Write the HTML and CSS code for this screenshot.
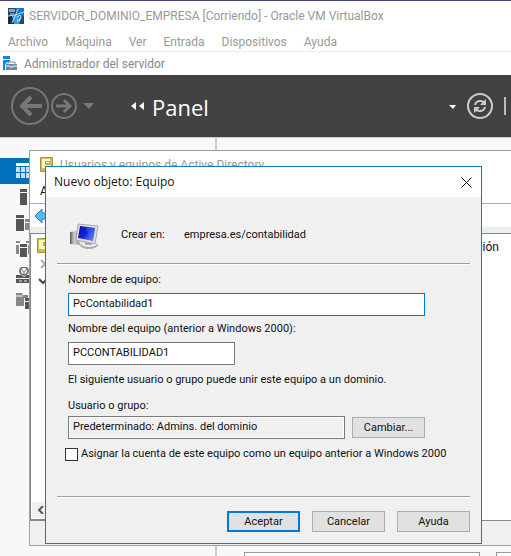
FILE: index.html
```html
<!DOCTYPE html>
<html lang="es">
<head>
<meta charset="utf-8">
<title>SERVIDOR_DOMINIO_EMPRESA</title>
<link rel="stylesheet" href="styles.css">
</head>
<body>
<header class="vm">
  <div class="vm-title">
    <svg width="16" height="16" viewBox="0 0 16 16"><path fill="#24486f" d="M0 0h16v16H0z"/><path fill="#1c75c4" d="M8 0h8v8H8z"/><path fill="#172c4c" d="M0 8h8v8H0z"/><path fill="#8ba3bd" d="M1 1h6v3H1z"/><path fill="#399fe3" d="m4 8 5-2 4 5-2 5H6z"/><path d="M10 1 7 8l-3 7M0 8l7-1 9-3M2 6h4" stroke="#b8d8ea" fill="none"/><path d="M9 9q4-3 4 0l-2 4-2-1" stroke="#e9eff5" fill="none"/></svg>
    <span>SERVIDOR_DOMINIO_EMPRESA [Corriendo] - Oracle VM VirtualBox</span>
  </div>
  <nav class="vm-menu"><span>Archivo</span><span>Máquina</span><span>Ver</span><span>Entrada</span><span>Dispositivos</span><span>Ayuda</span></nav>
</header>
<div class="sm-title">
  <svg width="15" height="15" viewBox="0 0 15 15"><path fill="#1686d9" d="M0 0h7v3H0zM0 4h7v2H4l-2 3v5H0z"/><path d="M5 8V6h7v2" fill="none" stroke="#6e8ca2"/><path fill="#6b8ca6" d="M3 8h11v6H3z"/><path d="M3 10h4v1h3v-1h4" stroke="#e8eef3" fill="none"/></svg>
  <span>Administrador del servidor</span>
</div>
<div class="banner">
  <svg class="history" width="84" height="40" viewBox="0 0 84 40"><g fill="none" stroke="#777"><circle cx="19" cy="20" r="18" stroke-width="2"/><circle cx="53" cy="20" r="12" stroke-width="2"/><path stroke-width="4" d="M31 20H10m10-9-9 9 9 9"/><path stroke-width="3" d="M45 20h15m-7-6 6 6-6 6"/></g><path fill="#777" d="M72 17h11l-5 6z"/></svg>
  <svg class="rewind" width="14" height="8" viewBox="0 0 14 8"><path fill="#fff" d="M5 0v8L0 4zM13 0v8L8 4z"/></svg>
  <h1>Panel</h1>
  <svg class="refresh" width="62" height="28" viewBox="0 0 62 28"><path fill="#fff" d="M0 13h7l-3 4z"/><g fill="none" stroke="#ccc" stroke-width="2"><circle cx="31" cy="14" r="12"/><path d="M26 13q1-4 5-4 3 0 5 2M36 15q-1 4-5 4-3 0-5-2"/></g><path fill="#ccc" d="M37 7v6h-6zM25 21v-6h6z"/><path fill="#bbb" d="M55 5h2v18h-2z"/></svg>
</div>
<main class="desk">
  <aside class="side">
    <div class="tab on"><svg width="14" height="16" viewBox="0 0 14 16"><path fill="#fff" d="M0 0h14v3H0z"/><path fill="#c9e1f2" d="M0 4h4v5H0zM5 4h4v5H5zM5 10h4v5H5zM0 10h4v5H0zM10 4h4v5h-4zM10 10h4v5h-4z"/></svg></div>
    <div class="tab"><svg width="14" height="16" viewBox="0 0 14 16"><path fill="#555" d="M4 0h7v3H4zM4 4h7v12H4z"/></svg></div>
    <div class="tab"><svg width="14" height="16" viewBox="0 0 14 16"><path fill="#555" d="M0 0h8v3H0zM0 4h8v12H0z"/><path fill="#888" d="M9 4h5v3H9zM9 8h5v7H9z"/></svg></div>
    <div class="tab"><svg width="14" height="16" viewBox="0 0 14 16"><path fill="#888" d="M0 0h4v2H0zM10 0h4v2h-4zM0 4h3v9H0zM12 4h2v9h-2z"/><path fill="#555" d="M4 3h7v3H4zM4 7h7v9H4z"/></svg></div>
    <div class="tab"><svg width="14" height="16" viewBox="0 0 14 16"><circle cx="8" cy="4" r="4" fill="none" stroke="#777" stroke-width="2"/><path d="m5 2 3 3 3-3M8 5v3" stroke="#777" fill="none"/><path fill="#555" d="M0 8h5l3 2 3-2h3v3H0zM0 12h14v4H0z"/><path stroke="#eee" d="M3 14h3m2 0h3"/></svg></div>
    <div class="tab"><svg width="14" height="16" viewBox="0 0 14 16"><path fill="#888" d="M0 0h6l1 2h5v3H8v1H0zM0 4h8v9H0z"/><path stroke="#f8f8f8" d="M0 3h7"/><path fill="#555" d="M9 5h5v3H9zM9 9h5v7H9z"/></svg></div>
  </aside>
  <section class="content">
    <div class="tile"></div><div class="tile"></div>
  </section>

  <section class="ad">
    <div class="ad-title">
      <svg width="13" height="16" viewBox="0 0 13 16"><path fill="#d4bd58" stroke="#ad913c" d="M.5.5h12v14H.5z"/><path fill="#fff4b5" d="M2 2h8v9H2z"/><path fill="#c5a83f" d="M5 4h5v4H5z"/><path fill="#fff" d="M6 5h3v1H6z"/></svg>
      <span>Usuarios y equipos de Active Directory</span>
    </div>
    <div class="ad-menu">Archivo</div>
    <div class="ad-tools"><svg width="18" height="16" viewBox="0 0 18 16"><path fill="#55baf0" stroke="#2783bd" d="m1 8 7-7v4h9v6H8v4z"/></svg></div>
    <div class="ad-panes">
      <div class="tree">
        <svg width="14" height="54" viewBox="0 0 14 54"><path fill="#d4bd58" stroke="#ad913c" d="M.5.5h13v14H.5z"/><path fill="#fff4b5" d="M2 2h8v9H2z"/><path fill="#c5a83f" d="M6 4h7v4H6z"/><path d="m4 22 4 4-4 4" stroke="#aaa" stroke-width="2" fill="none"/><path d="m2 41 4 4 4-4" stroke="#444" stroke-width="2" fill="none"/></svg>
        <div class="scroll"><svg width="7" height="8" viewBox="0 0 7 8"><path d="M6 0 2 4l4 4" stroke="#555" stroke-width="2" fill="none"/></svg></div>
      </div>
      <div class="list">Descripción</div>
    </div>
  </section>

  <form class="dialog">
    <div class="dlg-title"><h2>Nuevo objeto: Equipo</h2>
      <button class="close" type="button" aria-label="Cerrar"><svg width="11" height="11" viewBox="0 0 11 11"><path d="m.5.5 10 10m0-10-10 10" stroke="#111" fill="none"/></svg></button></div>
    <div class="dlg-body">
      <div class="where">
        <svg width="29" height="28" viewBox="0 0 29 28"><defs><linearGradient id="scr" x2="1" y2="1"><stop stop-color="#0610a0"/><stop offset=".5" stop-color="#1228d8"/><stop offset="1" stop-color="#82a4ff"/></linearGradient><linearGradient id="box"><stop stop-color="#555"/><stop offset=".4" stop-color="#ccc"/><stop offset="1" stop-color="#999"/></linearGradient></defs><path fill="url(#box)" d="m0 9 7-1 3 14-10-1z"/><ellipse cx="19" cy="22" rx="9" ry="4" fill="#aaa"/><ellipse cx="19" cy="21" rx="8" ry="3" fill="#eee"/><path fill="#aaa" d="m15 17 7 1v4h-7z"/><path fill="#e0e0dc" stroke="#aaa" d="m8 1 20 2-3 18-19-4z"/><path fill="url(#scr)" d="m10 3 15 2-2 13-15-3z"/><path fill="#4a6cf0" opacity=".5" d="m16 4 9 1-2 13-3-1z"/></svg>
        <span>Crear en:</span><span>empresa.es/contabilidad</span>
      </div>
      <hr>
      <div class="fields">
        <label for="n1">Nombre de equipo:</label>
        <input id="n1" class="active" type="text" value="PcContabilidad1">
        <label for="n2">Nombre del equipo (anterior a Windows 2000):</label>
        <input id="n2" class="short" type="text" value="PCCONTABILIDAD1">
        <p>El siguiente usuario o grupo puede unir este equipo a un dominio.</p>
        <label for="grp">Usuario o grupo:</label>
        <div class="pick"><input id="grp" type="text" readonly value="Predeterminado: Admins. del dominio"><button type="button">Cambiar...</button></div>
      </div>
      <label class="check"><input type="checkbox"><span>Asignar la cuenta de este equipo como un equipo anterior a Windows 2000</span></label>
      <hr>
      <div class="actions"><button class="default" type="button">Aceptar</button><button type="button">Cancelar</button><button type="button">Ayuda</button></div>
    </div>
  </form>
</main>
</body>
</html>
```
FILE: styles.css
```css
* { box-sizing: border-box; }
body {
  margin: 0;
  min-height: 100vh;
  display: flex;
  flex-direction: column;
  overflow: hidden;
  background: #fff;
  font: 12px/16px Roboto, "Noto Sans", sans-serif;
  color: #111;
}
svg { display: block; flex: none; }
.vm { border-top: 1px solid #41446c; border-bottom: 1px solid #ececec; color: #999; }
.vm-title { display: flex; align-items: center; gap: 5px; height: 30px; padding-left: 8px; }
.vm-menu { display: flex; align-items: center; gap: 17px; height: 20px; padding: 2px 0 0 8px; }
.sm-title { display: flex; align-items: center; gap: 6px; height: 23px; padding-left: 3px; color: #888; }
.banner { display: flex; align-items: center; height: 62px; padding-left: 11px; background: #424242; color: #fff; }
.rewind { margin-left: 36px; }
.banner h1 { margin: 0 0 0 7px; padding-top: 2px; font: 22px/30px "Open Sans", sans-serif; }
.refresh { margin-left: auto; }

.desk { position: relative; flex: 1; display: flex; min-height: 418px; border-top: 1px solid #ccc; background: #f8f8f8; }
.side { flex: none; width: 217px; padding-top: 20px; border-right: 2px solid #ccc; }
.tab { height: 26px; padding: 5px 0 0 16px; }
.on { background: #0070bb; }
.content { flex: 1; min-width: 0; display: flex; align-items: flex-end; gap: 16px; padding-left: 27px; }
.tile { width: 236px; height: 4px; flex: none; border: 1px solid #999; border-bottom: 0; background: #fff; }
.tile + .tile { flex: 1; min-width: 0; border-right: 0; }

.ad { position: absolute; top: 12px; left: 29px; right: 0; bottom: 10px; display: flex; flex-direction: column; border: 1px solid #a0a0a0; border-right: 0; background: #fff; }
.ad-title { display: flex; align-items: center; gap: 7px; height: 28px; padding-left: 10px; color: #999; }
.ad-menu { height: 25px; padding: 4px 0 0 10px; border-bottom: 1px solid #aaa; }
.ad-tools { height: 23px; padding: 4px; }
.ad-panes { flex: 1; display: flex; margin-bottom: 24px; border-bottom: 1px solid #888; border-top: 6px solid #eee; box-shadow: 0 24px #f0f0f0; }
.tree { display: flex; flex-direction: column; justify-content: space-between; width: 180px; border: 1px solid #828790; padding: 4px 1px 1px; }
.tree > svg { margin-left: 5px; }
.scroll { height: 16px; padding: 4px 5px; background: #f0f0f0; }
.list { flex: 1; padding: 5px 12px; border-top: 1px solid #828790; text-align: right; }

.dialog { position: absolute; top: 28px; left: 45px; right: 29px; border: 1px solid #1779ca; background: #f0f0f0; font: 11px/14px Roboto, "Noto Sans", sans-serif; }
.dlg-title { display: flex; align-items: center; justify-content: space-between; height: 30px; padding: 0 9px 0 8px; background: #fff; }
.dlg-title h2 { margin: 0; font: 12px/16px "Open Sans", sans-serif; }
.dialog .close { width: 11px; height: 11px; padding: 0; border: 0; background: none; }
.dlg-body { padding: 26px 11px 11px; }
.where { display: grid; grid-template-columns: 51px 63px 1fr; align-items: center; height: 28px; margin: 0 0 12px 13px; }
.where span { margin-bottom: 4px; }
hr { height: 2px; margin: 0; border: 0; border-top: 1px solid #a0a0a0; background: #fff; }
.fields { display: flex; flex-direction: column; align-items: flex-start; padding: 8px 45px 0 11px; }
.fields label { margin-bottom: 6px; }
.dialog input[type="text"] { width: 100%; height: 23px; margin: 0 0 6px; padding: 0 4px 2px; border: 1px solid #7a7a7a; background: #fff; color: #111; font: inherit; outline: 0; }
.dialog input.active { border-color: #0078d7; }
.dialog input.short { width: 167px; margin-bottom: 8px; }
.fields p { margin: 0 0 12px; }
.dialog .pick input[type="text"] { flex: 1; min-width: 0; margin: 0; background: #f0f0f0; box-shadow: inset 0 0 0 1px #fff; }
.fields label[for="grp"] { margin-bottom: 3px; }
.pick { display: flex; align-items: center; gap: 7px; width: 100%; }
.dialog button { width: 73px; height: 21px; padding: 0; border: 1px solid #adadad; background: #e1e1e1; color: #111; font: inherit; }
.dialog .default { border: 2px solid #0078d7; }
.check { display: flex; align-items: center; gap: 3px; margin: 8px 0 35px 8px; white-space: nowrap; }
.check input { appearance: none; width: 13px; height: 13px; margin: 0; border: 1px solid #333; background: #fff; }
.actions { display: flex; justify-content: flex-end; gap: 12px; margin-top: 13px; }
```
